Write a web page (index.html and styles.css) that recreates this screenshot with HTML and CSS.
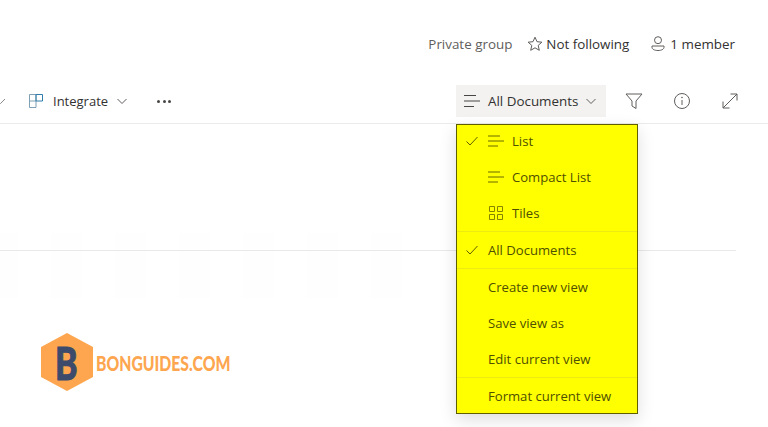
FILE: index.html
```html
<!DOCTYPE html>
<html lang="en">
<head>
<meta charset="utf-8">
<title>All Documents</title>
<link rel="stylesheet" href="styles.css">
</head>
<body>
<div class="page">
  <header class="meta">
    <span class="meta-private">Private group</span>
    <span class="meta-item">
      <svg width="16" height="16" viewBox="0 0 16 16"><path d="M8 1.200l2 4.500 4.900.5-3.700 3.200 1.100 4.900L8 11.800l-4.300 2.500 1.100-4.900L1.100 6.200 6 5.700z" fill="none" stroke="#605e5c"/></svg>
      Not following
    </span>
    <span class="meta-item meta-member">
      <svg width="16" height="16" viewBox="0 0 16 16"><circle cx="8" cy="4.200" r="3.500" fill="none" stroke="#605e5c"/><path d="M2 10h12v1.300c0 2-2.700 3.200-6 3.200s-6-1.200-6-3.200z" fill="none" stroke="#605e5c"/></svg>
      1 member
    </span>
  </header>
  <nav class="bar">
    <div class="bar-left">
      <svg class="chev-cut" width="10" height="10" viewBox="0 0 10 10"><path d="M-4 3l4.500 4.500L5 3" fill="none" stroke="#8a8886"/></svg>
      <svg class="integrate-icon" width="14" height="14" viewBox="0 0 14 14"><path d="M.5.500h6.500v13H.5zM.5 7H7" fill="none" stroke="#7f9fb5"/><path d="M7 .5h6.500V7H7z" fill="none" stroke="#2f7da8"/></svg>
      <span class="integrate-label">Integrate</span>
      <svg class="chev" width="10" height="10" viewBox="0 0 10 10"><path d="M.5 3L5 7.500 9.500 3" fill="none" stroke="#605e5c"/></svg>
      <span class="dots"><i></i><i></i><i></i></span>
    </div>
    <div class="bar-right">
      <div class="view-btn">
        <svg width="16" height="14" viewBox="0 0 16 14"><path d="M0 1.500h12M0 7h16M0 12.500h10" fill="none" stroke="#484644"/></svg>
        <span>All Documents</span>
        <svg class="chev" width="10" height="10" viewBox="0 0 10 10"><path d="M.5 3L5 7.500 9.500 3" fill="none" stroke="#605e5c"/></svg>
      </div>
      <svg class="tool" width="18" height="18" viewBox="0 0 18 18"><path d="M1 2h16l-6 7v7.500l-4-2.500V9z" fill="none" stroke="#605e5c"/></svg>
      <svg class="tool" width="18" height="18" viewBox="0 0 18 18"><circle cx="9" cy="9" r="7.500" fill="none" stroke="#605e5c"/><path d="M9 8v5" stroke="#605e5c"/><circle cx="9" cy="5.500" r=".8" fill="#605e5c"/></svg>
      <svg class="tool" width="18" height="18" viewBox="0 0 18 18"><path d="M2 16L16 2M9.500 2H16v6.500M2 9.500V16h6.500" fill="none" stroke="#605e5c"/></svg>
    </div>
  </nav>
  <main class="content">
    <div class="rule"></div>
    <div class="ghosts"><i></i><i></i><i></i><i></i><i></i><i></i><i></i></div>
  </main>
  <div class="brand">
    <svg width="52" height="58" viewBox="0 0 52 58"><path d="M26 0l26 14v30L26 58 0 44V14z" fill="#fda64f"/><text class="brand-b" transform="translate(14 47) scale(.74 1)">B</text></svg>
    <span class="brand-name">BONGUIDES.COM</span>
  </div>
  <div class="menu">
    <div class="group">
      <div class="item"><svg class="check" width="12" height="12" viewBox="0 0 12 12"><path d="M.5 6.500l3.500 3.500 7.500-8" fill="none" stroke="#5f5f00"/></svg><svg class="ico" width="16" height="12" viewBox="0 0 16 12"><path d="M0 1h12M0 6h16M0 11h10" fill="none" stroke="#6b6b00"/></svg><span>List</span></div>
      <div class="item"><span class="check-space"></span><svg class="ico" width="16" height="12" viewBox="0 0 16 12"><path d="M0 1h12M0 6h16M0 11h10" fill="none" stroke="#6b6b00"/></svg><span>Compact List</span></div>
      <div class="item"><span class="check-space"></span><svg class="ico" width="16" height="14" viewBox="0 0 16 14"><path d="M1.500.5h5v5h-5zM9.500.5h5v5h-5zM1.500 8.500h5v5h-5zM9.500 8.500h5v5h-5z" fill="none" stroke="#858500"/></svg><span>Tiles</span></div>
    </div>
    <div class="group">
      <div class="item"><svg class="check" width="12" height="12" viewBox="0 0 12 12"><path d="M.5 6.500l3.500 3.500 7.500-8" fill="none" stroke="#5f5f00"/></svg><span>All Documents</span></div>
    </div>
    <div class="group">
      <div class="item"><span class="check-space"></span><span>Create new view</span></div>
      <div class="item"><span class="check-space"></span><span>Save view as</span></div>
      <div class="item"><span class="check-space"></span><span>Edit current view</span></div>
    </div>
    <div class="group">
      <div class="item"><span class="check-space"></span><span>Format current view</span></div>
    </div>
  </div>
</div>
</body>
</html>
```
FILE: styles.css
```css
* { box-sizing: border-box; }
html, body { margin: 0; padding: 0; }
body { font-family: "Open Sans", "Liberation Sans", sans-serif; font-size: 13.4px; color: #323130; background: #fff; }
.page { position: relative; width: 768px; height: 427px; overflow: hidden; }
.meta { display: flex; justify-content: flex-end; align-items: center; height: 88px; padding: 0 33px 0 0; color: #323130; }
.meta-private { color: #605e5c; margin-right: 15px; }
.meta-item { display: flex; align-items: center; gap: 3px; }
.meta-member { margin-left: 21px; gap: 4px; }
.bar { display: flex; justify-content: space-between; align-items: center; height: 39px; border-bottom: 1px solid #edebe9; margin-top: -3px; padding-bottom: 6px; }
.bar-left { display: flex; align-items: center; }
.chev-cut { margin-right: 19px; }
.integrate-icon { margin-right: 10px; }
.integrate-label { color: #323130; margin-right: 9px; font-size: 13px; }
.dots { display: flex; gap: 2.500px; margin-left: 30px; }
.dots i { width: 3px; height: 3px; border-radius: 50%; background: #484644; }
.bar-right { display: flex; align-items: center; padding-right: 29px; }
.view-btn { display: flex; align-items: center; gap: 8px; width: 150px; height: 32px; padding: 0 9px 0 8px; background: #f3f2f1; color: #323130; margin-right: 19px; }
.tool { margin-right: 30px; }
.tool:last-child { margin-right: 0; }
.content { position: relative; padding-top: 126px; }
.rule { position: relative; z-index: 1; width: 736px; height: 1px; background: #e9e9e9; }
.ghosts { position: absolute; left: -13px; top: 109px; display: flex; gap: 33px; }
.ghosts i { width: 31px; height: 65px; background: #fefefe; }
.brand { position: absolute; left: 41px; top: 333px; display: flex; align-items: center; }
.brand-b { font-family: "Lato", sans-serif; font-weight: 900; font-size: 46px; fill: #3c4a6b; stroke: #3c4a6b; stroke-width: 1px; stroke-linejoin: round; }
.brand-name { font-family: "Lato", sans-serif; font-weight: 900; font-size: 21px; color: #fda64f; margin-left: 3px; white-space: nowrap; transform: scaleX(.75); transform-origin: left center; }
.menu { position: absolute; z-index: 2; left: 456px; top: 124px; width: 182px; height: 290px; background: #ff0; border: 1px solid #5f5f00; box-shadow: 0 6px 16px rgba(0,0,0,.13); color: #4f4f00; }
.group { border-bottom: 1px solid #ecec10; }
.group:first-child { margin-top: -2px; }
.group:last-child { border-bottom: 0; }
.item { display: flex; align-items: center; height: 36px; padding-left: 9px; font-size: 13.100px; }
.check { margin-right: 10px; flex: none; }
.check-space { width: 22px; flex: none; }
.ico { margin-right: 8px; flex: none; }
```
